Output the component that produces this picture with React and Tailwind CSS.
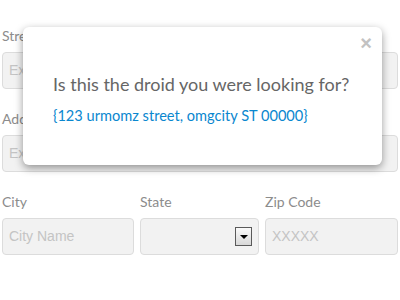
const Field = ({ label, placeholder, children }) => (
  <div className="flex flex-col">
    <label className="text-[14px] leading-[22px] text-[#8c8c8c] mb-[5px]">{label}</label>
    {children || (
      <div className="h-[37px] bg-[#f2f2f2] border border-[#dcdcdc] rounded-[4px] px-[6px] flex items-center text-[14px] text-[#c4c4c4] font-['Liberation_Sans',Arial,sans-serif]">
        {placeholder}
      </div>
    )}
  </div>
);

const App = () => {
  return (
    <div className="relative w-[400px] h-[300px] bg-white overflow-hidden font-['Lato','Open_Sans',sans-serif]">
      <div className="px-[2px] pt-[25px] flex flex-col gap-[19px]">
        <Field label="Street" placeholder="Ex. 123 Main Street" />
        <Field label="Address 2" placeholder="Ex. Apt 4B" />
        <div className="grid grid-cols-[132px_119px_1fr] gap-[6px]">
          <Field label="City" placeholder="City Name" />
          <Field label="State">
            <div className="h-[37px] bg-[#f2f2f2] border border-[#dcdcdc] rounded-[4px] flex items-center justify-end pr-[6px]">
              <div className="w-[17px] h-[19px] border border-[#5a5a5a] bg-gradient-to-b from-[#fafafa] to-[#d8d8d8] flex items-center justify-center">
                <div className="w-0 h-0 border-l-[4px] border-r-[4px] border-t-[4px] border-l-transparent border-r-transparent border-t-black" />
              </div>
            </div>
          </Field>
          <Field label="Zip Code" placeholder="XXXXX" />
        </div>
      </div>

      {/* modal */}
      <div className="absolute left-[23px] top-[27px] w-[359px] h-[138px] bg-white rounded-[6px] shadow-[0_3px_9px_rgba(0,0,0,0.4)]">
        <span className="absolute right-[10px] top-[4px] text-[20px] leading-[24px] font-bold text-[#c2c2c2] font-['Liberation_Sans',Arial,sans-serif]">
          ×
        </span>
        <div className="pl-[30px] pt-[44px]">
          <h3 className="text-[18px] leading-[26px] text-[#666666]">
            Is this the droid you were looking for?
          </h3>
          <p className="mt-[9px] text-[14.6px] leading-[20px] text-[#0a87cf]">
            {"{123 urmomz street, omgcity ST 00000}"}
          </p>
        </div>
      </div>
    </div>
  );
};

export default App;
